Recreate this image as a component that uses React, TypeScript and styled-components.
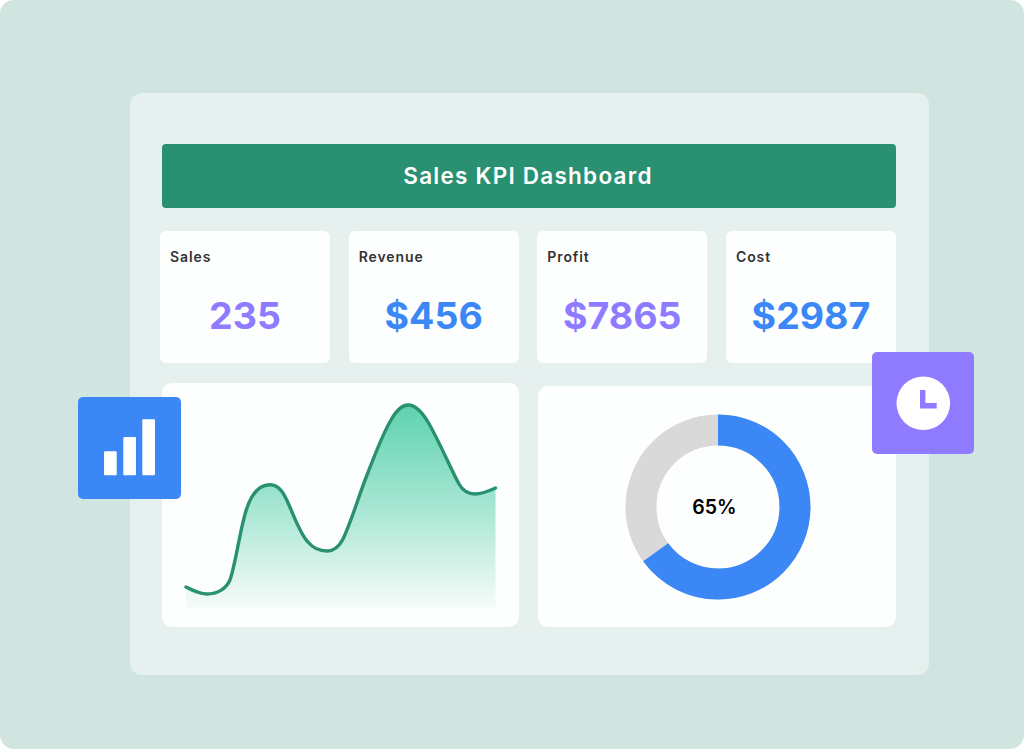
import styled, { createGlobalStyle } from "styled-components";

const GlobalStyle = createGlobalStyle`
  html, body {
    margin: 0;
    padding: 0;
    background: #ffffff;
  }
  body {
    font-family: Inter, "Liberation Sans", sans-serif;
  }
`;

const kpis = [
  { label: "Sales", value: "235", color: "#8f7bff" },
  { label: "Revenue", value: "$456", color: "#3b87f5" },
  { label: "Profit", value: "$7865", color: "#8f7bff" },
  { label: "Cost", value: "$2987", color: "#3b87f5" },
];

const curve =
  "M24 204 C32 208 38 211 45 211 C55 211 64 206 68 197 C74 180 79 140 85 125 C90 110 98 101.700 108 101.700 C117 101.700 122 110 127 122 C134 138 139 152 146 159 C151 165 158 168 165 168 C172 168 177 164 181 156 C190 137 197 112 205 92 C213 72 220 52 229 37 C234 28 239 22 246 22 C254 22 260 29 266 39 C276 56 288 84 297 101 C301 108 306 111 313 111 C320 111 327 108 333.500 105";

export default function App() {
  return (
    <>
      <GlobalStyle />
      <Backdrop>
        <Panel>
          <Header>Sales KPI Dashboard</Header>
          <KpiRow>
            {kpis.map((kpi) => (
              <KpiCard key={kpi.label}>
                <KpiLabel>{kpi.label}</KpiLabel>
                <KpiValue $color={kpi.color}>{kpi.value}</KpiValue>
              </KpiCard>
            ))}
          </KpiRow>
          <ChartRow>
            <AreaCard>
              <svg width="357" height="244" viewBox="0 0 357 244">
                <defs>
                  <linearGradient id="areaFill" x1="0" y1="0" x2="0" y2="1">
                    <stop offset="0" stopColor="#5fd3ae" />
                    <stop offset="0.5" stopColor="#a6e6d2" />
                    <stop offset="1" stopColor="#f7fbfa" />
                  </linearGradient>
                </defs>
                <path d={`${curve} L333.500 225 L24 225 Z`} fill="url(#areaFill)" />
                <path
                  d={curve}
                  fill="none"
                  stroke="#2a9072"
                  strokeWidth="3.400"
                  strokeLinecap="round"
                />
              </svg>
            </AreaCard>
            <DonutCard>
              <DonutWrap>
                <svg width="186" height="186" viewBox="0 0 186 186">
                  <circle cx="93" cy="93" r="77" fill="none" stroke="#d9d9d9" strokeWidth="31" />
                  <circle
                    cx="93"
                    cy="93"
                    r="77"
                    fill="none"
                    stroke="#3b87f5"
                    strokeWidth="31"
                    pathLength="100"
                    strokeDasharray="65 35"
                    transform="rotate(-90 93 93)"
                  />
                </svg>
                <DonutLabel>65%</DonutLabel>
              </DonutWrap>
            </DonutCard>
          </ChartRow>
        </Panel>
        <BlueTile>
          <svg width="103" height="102" viewBox="0 0 103 102">
            <rect x="26" y="54.300" width="12.700" height="24" rx="1" fill="#fff" />
            <rect x="45.300" y="40" width="12.700" height="38.300" rx="1" fill="#fff" />
            <rect x="64.300" y="22.300" width="12.700" height="56" rx="1" fill="#fff" />
          </svg>
        </BlueTile>
        <PurpleTile>
          <svg width="102" height="102" viewBox="0 0 102 102">
            <circle cx="51.300" cy="51.300" r="26.800" fill="#fff" />
            <path d="M48 38h5.400v13h11.300v5.400H48z" fill="#8f7bff" />
          </svg>
        </PurpleTile>
      </Backdrop>
    </>
  );
}

const Backdrop = styled.div`
  position: relative;
  width: 1024px;
  height: 749px;
  box-sizing: border-box;
  padding: 93px 95px 74px 130px;
  background-color: #d1e5e0;
  border-radius: 14px;
  overflow: hidden;
`;

const Panel = styled.div`
  display: flex;
  flex-direction: column;
  height: 100%;
  box-sizing: border-box;
  padding: 51px 33px 48px 32px;
  background-color: #e6f0ee;
  border-radius: 12px;
`;

const Header = styled.div`
  display: flex;
  align-items: center;
  justify-content: center;
  height: 64px;
  padding: 0 2px 1px 0;
  box-sizing: border-box;
  background-color: #2a9072;
  border-radius: 4px;
  color: #ffffff;
  font-size: 22.500px;
  font-weight: 600;
  letter-spacing: 1.250px;
`;

const KpiRow = styled.div`
  display: flex;
  justify-content: space-between;
  margin: 23px 0 0 -2px;
`;

const KpiCard = styled.div`
  width: 170px;
  height: 132px;
  box-sizing: border-box;
  padding: 18px 10px 0;
  background-color: #fdfefe;
  border-radius: 6px;
`;

const KpiLabel = styled.div`
  color: #333333;
  font-size: 14px;
  font-weight: 600;
  line-height: 16px;
  letter-spacing: 0.900px;
`;

const KpiValue = styled.div<{ $color: string }>`
  margin-top: 29px;
  color: ${(p) => p.$color};
  font-size: 37.500px;
  font-weight: 700;
  line-height: 44px;
  text-align: center;
`;

const ChartRow = styled.div`
  display: flex;
  flex: 1;
  align-items: flex-end;
  justify-content: space-between;
`;

const AreaCard = styled.div`
  width: 357px;
  height: 244px;
  background-color: #fdfefe;
  border-radius: 10px;
  overflow: hidden;

  svg {
    display: block;
  }
`;

const DonutCard = styled.div`
  display: flex;
  justify-content: center;
  width: 358px;
  height: 241px;
  box-sizing: border-box;
  padding: 28px 0 0 2px;
  background-color: #fdfefe;
  border-radius: 10px;
`;

const DonutWrap = styled.div`
  position: relative;
  width: 186px;
  height: 186px;

  svg {
    display: block;
  }
`;

const DonutLabel = styled.div`
  position: absolute;
  inset: 0 7px 0 0;
  display: flex;
  align-items: center;
  justify-content: center;
  color: #000000;
  font-size: 19.500px;
  font-weight: 600;
`;

const Tile = styled.div`
  position: absolute;
  height: 102px;
  border-radius: 5px;

  svg {
    display: block;
  }
`;

const BlueTile = styled(Tile)`
  left: 78px;
  top: 397px;
  width: 103px;
  background-color: #3b87f5;
`;

const PurpleTile = styled(Tile)`
  left: 872px;
  top: 352px;
  width: 102px;
  background-color: #8f7bff;
`;
